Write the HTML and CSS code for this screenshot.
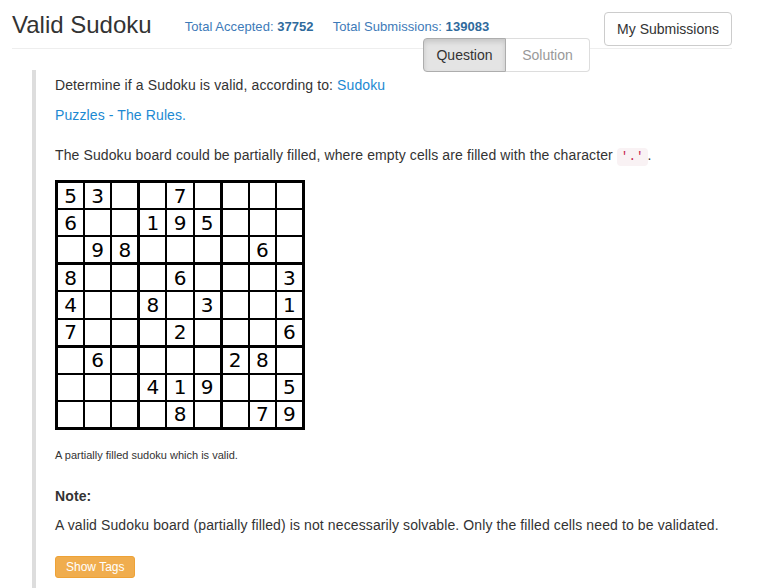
FILE: index.html
```html
<!DOCTYPE html>
<html lang="en">
<head>
<meta charset="utf-8">
<title>Valid Sudoku</title>
<link rel="stylesheet" href="styles.css">
</head>
<body>
<div class="page">
  <header class="head">
    <h1 class="title">Valid Sudoku</h1>
    <div class="stats">
      <span class="stat">Total Accepted: <b>37752</b></span>
      <span class="stat">Total Submissions: <b>139083</b></span>
    </div>
    <button class="btn-sub">My Submissions</button>
  </header>
  <nav class="tabs">
    <span class="tab tab-active">Question</span>
    <span class="tab tab-right">Solution</span>
  </nav>
  <section class="problem">
    <p class="p-first">Determine if a Sudoku is valid, according to: <a class="link" href="#">Sudoku<br>Puzzles - The Rules.</a></p>
    <p class="p-second">The Sudoku board could be partially filled, where empty cells are filled with the character <code class="code">'.'</code>.</p>
    <div class="board">
      <div class="box"><div class="cell">5</div><div class="cell">3</div><div class="cell"></div><div class="cell">6</div><div class="cell"></div><div class="cell"></div><div class="cell"></div><div class="cell">9</div><div class="cell">8</div></div>
      <div class="box"><div class="cell"></div><div class="cell">7</div><div class="cell"></div><div class="cell">1</div><div class="cell">9</div><div class="cell">5</div><div class="cell"></div><div class="cell"></div><div class="cell"></div></div>
      <div class="box"><div class="cell"></div><div class="cell"></div><div class="cell"></div><div class="cell"></div><div class="cell"></div><div class="cell"></div><div class="cell"></div><div class="cell">6</div><div class="cell"></div></div>
      <div class="box"><div class="cell">8</div><div class="cell"></div><div class="cell"></div><div class="cell">4</div><div class="cell"></div><div class="cell"></div><div class="cell">7</div><div class="cell"></div><div class="cell"></div></div>
      <div class="box"><div class="cell"></div><div class="cell">6</div><div class="cell"></div><div class="cell">8</div><div class="cell"></div><div class="cell">3</div><div class="cell"></div><div class="cell">2</div><div class="cell"></div></div>
      <div class="box"><div class="cell"></div><div class="cell"></div><div class="cell">3</div><div class="cell"></div><div class="cell"></div><div class="cell">1</div><div class="cell"></div><div class="cell"></div><div class="cell">6</div></div>
      <div class="box"><div class="cell"></div><div class="cell">6</div><div class="cell"></div><div class="cell"></div><div class="cell"></div><div class="cell"></div><div class="cell"></div><div class="cell"></div><div class="cell"></div></div>
      <div class="box"><div class="cell"></div><div class="cell"></div><div class="cell"></div><div class="cell">4</div><div class="cell">1</div><div class="cell">9</div><div class="cell"></div><div class="cell">8</div><div class="cell"></div></div>
      <div class="box"><div class="cell">2</div><div class="cell">8</div><div class="cell"></div><div class="cell"></div><div class="cell"></div><div class="cell">5</div><div class="cell"></div><div class="cell">7</div><div class="cell">9</div></div>
    </div>
    <div class="caption">A partially filled sudoku which is valid.</div>
    <div class="note">Note:</div>
    <p class="p-note">A valid Sudoku board (partially filled) is not necessarily solvable. Only the filled cells need to be validated.</p>
    <button class="btn-tags">Show Tags</button>
  </section>
</div>
</body>
</html>
```
FILE: styles.css
```css
* { box-sizing: border-box; }
html, body { margin: 0; padding: 0; background: #fff; }
body {
  font-family: "Liberation Sans", Arial, sans-serif;
  font-size: 14px;
  color: #333;
}
.page {
  width: 720px;
  margin-left: 12px;
}
.head {
  display: flex;
  align-items: flex-start;
  height: 49px;
  padding-top: 12px;
  border-bottom: 1px solid #eee;
}
.title {
  margin: 0;
  font-size: 24px;
  line-height: 26px;
  font-weight: normal;
  color: #333;
}
.stats {
  display: flex;
  gap: 19px;
  margin-left: 33px;
  margin-top: 5px;
  font-size: 13px;
  line-height: 20px;
  color: #3d7ab8;
  letter-spacing: 0.05px;
}
.stat b { color: #2f6a9c; font-weight: bold; }
.btn-sub {
  margin-left: auto;
  font-family: inherit;
  font-size: 14px;
  line-height: 20px;
  padding: 6px 12px;
  color: #333;
  background: #fff;
  border: 1px solid #ccc;
  border-radius: 4px;
}
.tabs {
  display: flex;
  justify-content: flex-end;
  padding-right: 142px;
  margin-top: -11px;
}
.tab {
  width: 84px;
  text-align: center;
  padding: 6px 0;
  line-height: 20px;
  border: 1px solid #ddd;
  background: #fff;
  color: #999;
}
.tab-active {
  width: 83px;
  background: #e4e4e4;
  border-color: #adadad;
  color: #333;
  border-radius: 4px 0 0 4px;
  box-shadow: inset 0 3px 5px rgba(0,0,0,.125);
}
.tab-right {
  border-left: none;
  border-radius: 0 4px 4px 0;
}
.problem {
  margin-left: 20px;
  margin-top: -2px;
  border-left: 4px solid #ddd;
  padding-left: 19px;
  padding-bottom: 20px;
  letter-spacing: 0.11px;
}
.problem p { margin: 0; }
.p-first { line-height: 30px; }
.p-second { margin-top: 10px !important; line-height: 30px; }
.link { color: #1d89d2; text-decoration: none; }
.code {
  font-family: "Liberation Mono", monospace;
  font-size: 12.6px;
  line-height: 14px;
  letter-spacing: 0;
  padding: 2px 4px;
  color: #c7254e;
  background: #f9f2f4;
  border-radius: 4px;
}
.board {
  margin-top: 10px;
  width: 250px;
  height: 250px;
  padding: 3px;
  background: #000;
  display: grid;
  grid-template-columns: repeat(3, 1fr);
  grid-template-rows: repeat(3, 1fr);
  gap: 3px;
  letter-spacing: 0;
}
.box {
  display: grid;
  grid-template-columns: repeat(3, 1fr);
  grid-template-rows: repeat(3, 1fr);
  gap: 2px;
  background: #000;
}
.cell {
  background: #fff;
  display: flex;
  align-items: center;
  justify-content: center;
  font-family: "DejaVu Sans", sans-serif;
  font-size: 20px;
  color: #000;
}
.caption {
  margin-top: 15px;
  font-size: 11px;
  line-height: 20px;
  letter-spacing: 0;
  color: #333;
}
.note {
  margin-top: 21px;
  font-weight: bold;
  line-height: 20px;
}
.p-note {
  margin-top: 9px !important;
  line-height: 20px;
}
.btn-tags {
  margin-top: 21px;
  font-family: inherit;
  font-size: 12px;
  line-height: 18px;
  padding: 1px 10px;
  color: #fff;
  background: #f0ad4e;
  border: 1px solid #eea236;
  border-radius: 3px;
  letter-spacing: 0;
}
```
